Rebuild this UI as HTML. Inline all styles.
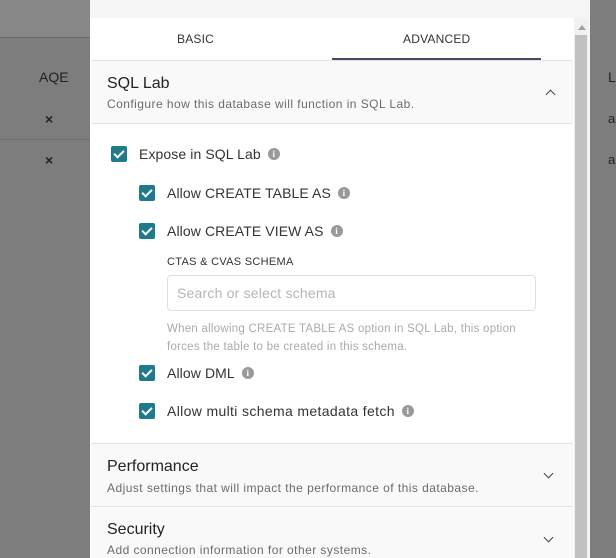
<!DOCTYPE html>
<html><head><style>
*{box-sizing:border-box;margin:0;padding:0}
html,body{width:616px;height:558px;overflow:hidden}
body{background:#7d7d7d;font-family:"Liberation Sans",sans-serif;position:relative}
.abs{position:absolute}
.modal{left:90px;top:0;width:500px;height:558px;background:#f5f5f5}
.white{left:90px;top:18px;width:484px;height:540px;background:#fff}
.sb{left:574px;top:18px;width:14px;height:540px;background:#f1f1f1}
.thumb{left:575px;top:35px;width:12px;height:523px;background:#c1c1c1}
.tab{font-size:12px;color:#333;top:32px;letter-spacing:0.2px}
.ul{left:332px;top:58px;width:209px;height:2px;background:#484c63}
.panel{left:91px;width:482px;background:#f9f9f9;border-top:1px solid #e3e3e3}
.h{font-size:16px;color:#222;left:16px}
.sub{font-size:12px;color:#6b6b6b;left:16px;letter-spacing:0.45px;white-space:nowrap}
.cb{width:16px;height:16px;background:#1f7a8c;border-radius:2px}
.cb:after{content:"";position:absolute;left:5px;top:2px;width:4px;height:8px;border:solid #fff;border-width:0 2px 2px 0;transform:rotate(45deg)}
.lbl{font-size:14px;color:#333;white-space:nowrap;letter-spacing:0.1px}
.i{display:inline-block;width:12px;height:12px;border-radius:50%;background:#999;color:#fff;font-size:9px;font-weight:bold;text-align:center;line-height:12px;vertical-align:2px;margin-left:7px;font-family:"Liberation Serif",serif}
.chev{width:7px;height:7px;border:solid #444;border-width:1.2px 0 0 1.2px}
</style></head><body>
<div class="abs" style="left:0;top:0;width:90px;height:37px;background:#888"></div>
<div class="abs" style="left:0;top:37px;width:90px;height:1px;background:#6a6a6a"></div>
<div class="abs" style="left:0;top:139px;width:90px;height:1px;background:#6e6e6e"></div>
<div class="abs" style="left:39px;top:69px;font-size:14px;color:#222">AQE</div>
<div class="abs" style="left:45px;top:111px;font-size:14px;color:#222;font-weight:bold">×</div>
<div class="abs" style="left:45px;top:152px;font-size:14px;color:#222;font-weight:bold">×</div>
<div class="abs" style="left:608px;top:69px;font-size:14px;color:#222">L</div>
<div class="abs" style="left:608px;top:111px;font-size:13px;color:#222">a</div>
<div class="abs" style="left:608px;top:152px;font-size:13px;color:#222">a</div>
<div class="abs modal"></div>
<div class="abs white"></div>
<div class="abs sb"></div>
<div class="abs thumb"></div>
<div class="abs" style="left:578px;top:25px;width:0;height:0;border:4px solid transparent;border-bottom:5px solid #a0a0a0;border-top:0"></div>
<div class="abs tab" style="left:177px">BASIC</div>
<div class="abs tab" style="left:403px">ADVANCED</div>
<div class="abs ul"></div>
<div class="abs panel" style="top:60px;height:64px;border-bottom:1px solid #e3e3e3">
 <div class="abs h" style="top:14px">SQL Lab</div>
 <div class="abs sub" style="top:36px">Configure how this database will function in SQL Lab.</div>
 <div class="abs chev" style="left:456px;top:30px;transform:rotate(45deg)"></div>
</div>
<div class="abs cb" style="left:111px;top:146px"></div>
<div class="abs lbl" style="left:139px;top:146px">Expose in SQL Lab<span class="i">i</span></div>
<div class="abs cb" style="left:139px;top:185px"></div>
<div class="abs lbl" style="left:167px;top:185px">Allow CREATE TABLE AS<span class="i">i</span></div>
<div class="abs cb" style="left:139px;top:223px"></div>
<div class="abs lbl" style="left:167px;top:223px">Allow CREATE VIEW AS<span class="i">i</span></div>
<div class="abs" style="left:167px;top:256px;font-size:11px;color:#333;letter-spacing:0.3px">CTAS &amp; CVAS SCHEMA</div>
<div class="abs" style="left:167px;top:275px;width:369px;height:36px;border:1px solid #e0e0e0;border-radius:4px;font-size:14px;color:#b5b5b5;padding:9px 9px;letter-spacing:0.2px">Search or select schema</div>
<div class="abs" style="left:167px;top:320px;font-size:11.5px;color:#aaa;line-height:18px;width:362px;letter-spacing:0.25px">When allowing CREATE TABLE AS option in SQL Lab, this option forces the table to be created in this schema.</div>
<div class="abs cb" style="left:139px;top:365px"></div>
<div class="abs lbl" style="left:167px;top:365px">Allow DML<span class="i">i</span></div>
<div class="abs cb" style="left:139px;top:403px"></div>
<div class="abs lbl" style="left:167px;top:403px;letter-spacing:0.35px">Allow multi schema metadata fetch<span class="i">i</span></div>
<div class="abs panel" style="top:443px;height:64px">
 <div class="abs h" style="top:14px">Performance</div>
 <div class="abs sub" style="top:37px">Adjust settings that will impact the performance of this database.</div>
 <div class="abs chev" style="left:454px;top:26px;transform:rotate(225deg)"></div>
</div>
<div class="abs panel" style="top:506px;height:52px">
 <div class="abs h" style="top:14px">Security</div>
 <div class="abs sub" style="top:36px">Add connection information for other systems.</div>
 <div class="abs chev" style="left:454px;top:27px;transform:rotate(225deg)"></div>
</div>
</body></html>
